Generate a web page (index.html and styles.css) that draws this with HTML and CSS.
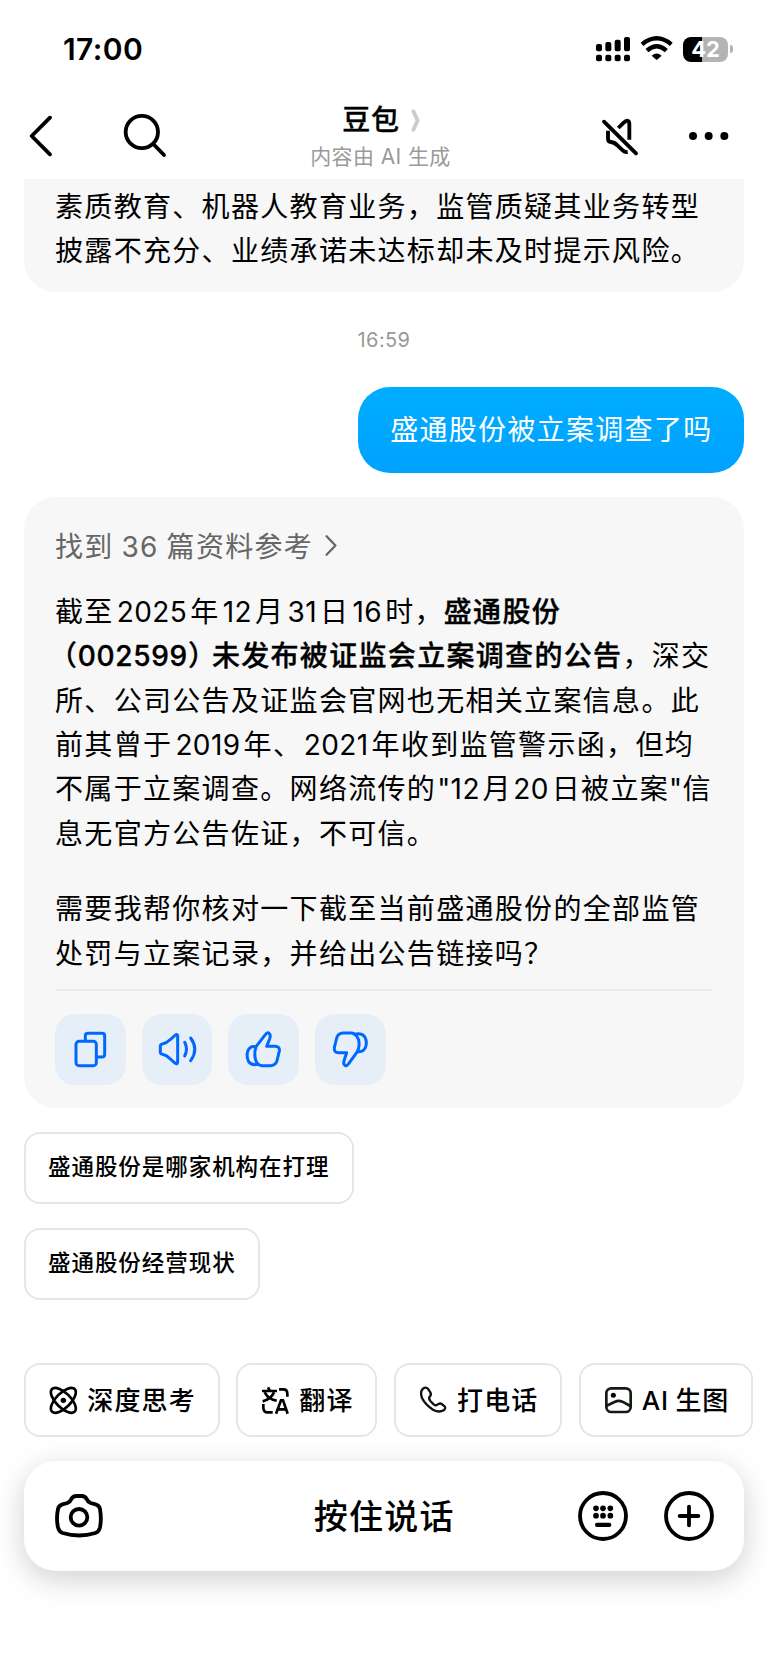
FILE: index.html
```html
<!DOCTYPE html>
<html lang="zh-CN">
<head>
<meta charset="utf-8">
<title>豆包</title>
<link rel="stylesheet" href="styles.css">
</head>
<body>
<div class="phone">
  <div class="status">
    <span class="clock">17:00</span>
    <div class="status-icons">
      <svg class="signal" viewBox="633 108 102 78"><g fill="#000"><rect x="633" y="132" width="18" height="22" rx="6"/><rect x="661" y="126" width="18" height="28" rx="6"/><rect x="689" y="119" width="18" height="35" rx="6"/><rect x="717" y="111" width="18" height="43" rx="6"/><rect x="633" y="164" width="18" height="20" rx="6"/><rect x="661" y="164" width="18" height="20" rx="6"/><rect x="689" y="164" width="18" height="20" rx="6"/><rect x="717" y="164" width="18" height="20" rx="6"/></g></svg>
      <svg class="wifi" viewBox="765 108 99 78"><path d="M771 133Q815 97 859 133M786 152Q815 126 844 152" fill="none" stroke="#000" stroke-width="13"/><path d="M800 167Q815 154 830 167L818 178Q815 181 812 178Z"/></svg>
      <div class="battery"><span>42</span></div>
      <span class="battery-tip"></span>
    </div>
  </div>

  <header class="header">
    <svg class="back" viewBox="84 339 78 138"><path d="M150 353L95 408L150 463" class="line w11"/></svg>
    <svg class="search" viewBox="366 339 138 138"><circle cx="425.500" cy="396" r="48.500" class="line w11"/><path d="M460 432L492 465" class="line w11"/></svg>
    <div class="title">
      <div class="name">豆包<svg viewBox="76 322 36 76"><path d="M86 332L99 360L86 388" fill="none" stroke="#ccc" stroke-width="12" stroke-linecap="round" stroke-linejoin="round"/></svg></div>
      <div class="sub">内容由 AI 生成</div>
    </div>
    <svg class="mute" viewBox="648 339 120 138"><g class="line w11"><path d="M660 365L756 460"/><path stroke-linecap="butt" d="M703 384L719 368Q736 354 736 373V419"/><path stroke-linecap="butt" d="M672 392V416Q672 425 681 426Q692 427 701 437L717 452Q722 457 731 456"/></g></svg>
    <svg class="more" viewBox="909 339 132 138"><circle cx="927" cy="408" r="12"/><circle cx="974" cy="408" r="12"/><circle cx="1021" cy="408" r="12"/></svg>
  </header>

  <main class="chat">
    <section class="card card-prev">
      <p><span>素质教育、机器人教育业务，监管质疑其业务转型</span><span>披露不充分、业绩承诺未达标却未及时提示风险。</span></p>
    </section>
    <time class="time">16:59</time>
    <div class="bubble">盛通股份被立案调查了吗</div>
    <section class="card answer">
      <div class="source">找到 36 篇资料参考<svg viewBox="970 160 44 76"><path d="M977 170L1004 198L977 226" fill="none" stroke="#666" stroke-width="7" stroke-linecap="round" stroke-linejoin="round"/></svg></div>
      <p>
        <span>截至<i>2025</i>年<i>12</i>月<i>31</i>日<i>16</i>时，<b>盛通股份</b></span>
        <span><b class="lead">（002599<em class="close">）</em></b><b>未发布被证监会立案调查的公告</b>，深交</span>
        <span>所、公司公告及证监会官网也无相关立案信息。此</span>
        <span>前其曾于<i>2019</i>年、<i class="tight">2021</i>年收到监管警示函，但均</span>
        <span>不属于立案调查。网络流传的<i class="quote">"12</i>月<i class="tight">20</i>日被立案<i class="unquote">"</i>信</span>
        <span>息无官方公告佐证，不可信。</span>
      </p>
      <p class="follow">
        <span>需要我帮你核对一下截至当前盛通股份的全部监管</span>
        <span>处罚与立案记录，并给出公告链接吗？</span>
      </p>
      <div class="actions">
        <button><svg viewBox="166 402 212 212"><path d="M257 480V468Q257 460 265 460H307Q315 460 315 468V523Q315 531 307 531H295" class="blue"/><rect x="229" y="484" width="61" height="73" rx="9" class="blue"/></svg></button>
        <button><svg viewBox="426 402 212 212"><path d="M481 498Q481 493 487 492Q499 490 509 480L525 466Q533 460 533 469V546Q533 555 525 549L509 535Q499 525 487 523Q481 522 481 517Z" class="blue"/><path d="M554 487Q565 507 554 528M572 474Q597 508 572 542" class="blue"/></svg></button>
        <button><svg viewBox="686 402 212 212"><path d="M770 500L798 464Q804 455 810 461Q815 465 811 476L802 499H827Q842 499 840 513L833 542Q829 556 815 557H788Q772 556 768 536Q764 518 770 500Z" class="blue"/><path d="M767 500Q752 497 745 514Q741 528 747 543Q754 557 776 553" class="blue"/></svg></button>
        <button><svg viewBox="946 402 212 212"><path d="M1073 515L1046 552Q1040 561 1034 554Q1030 550 1034 539L1041 518H1017Q1002 518 1004 503L1011 474Q1015 460 1030 459H1056Q1070 461 1077 480Q1081 498 1073 515Z" class="blue"/><path d="M1064 463Q1084 458 1095 470Q1104 486 1097 503Q1090 517 1075 515" class="blue"/></svg></button>
      </div>
    </section>
    <div class="suggests">
      <button class="pill">盛通股份是哪家机构在打理</button>
      <button class="pill">盛通股份经营现状</button>
    </div>
  </main>

  <nav class="tools">
    <button class="pill"><svg viewBox="147 137 86 86"><g fill="none" stroke="#000" stroke-width="8"><ellipse cx="190" cy="180" rx="48" ry="22" transform="rotate(45 190 180)"/><ellipse cx="190" cy="180" rx="48" ry="22" transform="rotate(-45 190 180)"/></g><circle cx="190" cy="180" r="8"/></svg><span>深度思考</span></button>
    <button class="pill"><svg viewBox="782 134 86 86"><g fill="none" stroke="#000" stroke-width="8"><path d="M785 149H830M803 138L809 149M793 153Q805 175 829 178M821 153Q812 173 787 180"/><path d="M836 144H849Q861 144 861 157V166M789 188V199Q789 213 803 213H817M827 217L842 177H848L862 217M833 204H857"/></g></svg><span>翻译</span></button>
    <button class="pill"><svg viewBox="102 137 86 86"><path d="M114 145Q123 138 130 147L136 156Q140 163 134 169Q130 175 136 182L146 192Q152 197 157 193Q164 187 170 191L178 197Q184 203 176 210Q162 218 144 208Q121 193 111 173Q104 154 114 145Z" fill="none" stroke="#111" stroke-width="7"/></svg><span>打电话</span></button>
    <button class="pill"><svg viewBox="657 137 86 86"><g fill="none" stroke="#121c10" stroke-width="8"><rect x="664" y="144" width="73" height="71" rx="15"/><path d="M665 196L690 184Q701 179 712 184L736 197"/></g><circle cx="685" cy="165" r="7.500"/></svg><span class="latin">AI 生图</span></button>
  </nav>

  <footer class="input">
    <svg class="camera" viewBox="162 450 150 156"><g fill="none" stroke="#000" stroke-width="11.500"><path d="M202 489Q211 485 214 477Q219 468 229 468H245Q255 468 260 477Q263 485 272 489L287 493Q298 496 300 507Q305 537 300 562Q297 575 286 579Q237 594 188 579Q177 575 174 562Q168 537 174 507Q176 496 187 493Z"/><circle cx="237" cy="532" r="25"/></g></svg>
    <span class="talk">按住说话</span>
    <svg viewBox="580 450 150 156"><circle cx="655" cy="528" r="69" class="line w11"/><g><circle cx="634" cy="505" r="8.500"/><circle cx="655" cy="505" r="8.500"/><circle cx="677" cy="505" r="8.500"/><circle cx="634" cy="527" r="8.500"/><circle cx="655" cy="527" r="8.500"/><circle cx="677" cy="527" r="8.500"/><rect x="631" y="548" width="49" height="13" rx="6"/></g></svg>
    <svg viewBox="840 450 150 156"><circle cx="915" cy="528" r="69" class="line w11"/><path d="M887 528H943M915 500V556" class="line w11"/></svg>
  </footer>
</div>
</body>
</html>
```

FILE: styles.css
```css
* { box-sizing: border-box; }
body { margin: 0; background: #fff; }
.phone {
  width: 768px; height: 1663px; overflow: hidden;
  display: flex; flex-direction: column;
  font-family: Inter, "Noto Sans CJK SC", sans-serif;
  color: #000; background: #fff;
}
svg { display: block; flex: none; overflow: visible; }
button { font: inherit; color: inherit; margin: 0; padding: 0; border: 0; background: none; }
.line { fill: none; stroke: #000; stroke-linecap: round; stroke-linejoin: round; }
.w11 { stroke-width: 11.500px; }
.blue { fill: none; stroke: #0068ff; stroke-width: 9; stroke-linecap: round; stroke-linejoin: round; }

.status { height: 93px; padding: 5px 35px 0 63px; display: flex; align-items: center; justify-content: space-between; }
.clock { font-size: 30px; font-weight: 600; line-height: 40px; letter-spacing: .4px; }
.status-icons { display: flex; align-items: center; }
.signal { width: 34px; height: 26px; }
.wifi { width: 33px; height: 26px; margin-left: 10px; }
.battery {
  width: 45px; height: 25px; margin-left: 10px; border-radius: 8px; margin-right: 1px;
  background: linear-gradient(90deg, #000 0 43%, #b3b3b3 43%);
  color: #fff; font-size: 22px; font-weight: 700; line-height: 25px; text-align: center;
}
.battery-tip { width: 3px; height: 8px; margin-left: 1px; border-radius: 0 4px 4px 0; background: #b3b3b3; }

.header { height: 86px; display: flex; align-items: center; padding: 0 37px 0 28px; }
.back { width: 26px; height: 46px; }
.search { width: 46px; height: 46px; margin-left: 68px; }
.title { flex: 1; display: flex; flex-direction: column; align-items: center; padding: 2px 7px 0 0; }
.name { display: flex; align-items: center; font-size: 28px; font-weight: 500; -webkit-text-stroke: .3px; line-height: 40px; letter-spacing: .8px; padding-left: 3px; margin-top: -1px; margin-bottom: 1px; }
.name svg { width: 12px; height: 25px; margin-left: 10px; }
.sub { font-size: 21px; line-height: 32px; color: #999; letter-spacing: .4px; white-space: nowrap; }
.mute { width: 40px; height: 46px; }
.more { width: 44px; height: 46px; margin-left: 47px; }

.chat { display: flex; flex-direction: column; padding: 0 24px; }
.card { background: #f7f7f7; border-radius: 32px; padding: 0 31px; }
.card p { margin: 0; font-size: 28px; line-height: 44.400px; letter-spacing: 1.320px; }
.card p span { display: block; white-space: nowrap; }
.card i { font-style: normal; padding: 0 3.100px; letter-spacing: .4px; }
.card .tight { padding: 0 3px 0 1.500px; }
.card .quote { padding: 0 2.500px 0 1px; }
.card .unquote { padding: 0; }
.card b { font-weight: 500; -webkit-text-stroke: .35px; }
.card em { font-style: normal; }
.card .lead { letter-spacing: .7px; margin-left: -6px; }
.card .close { letter-spacing: -4px; }
.card-prev { height: 113px; padding-top: 6px; border-radius: 0 0 32px 32px; }
.time { margin-top: 33px; height: 30px; line-height: 30px; font-size: 20px; letter-spacing: .4px; text-align: center; color: #999; }
.bubble {
  align-self: flex-end; margin-top: 32px; height: 86px; padding: 0 31.500px 0 32px; line-height: 86px;
  border-radius: 32px; background: linear-gradient(#00adff, #00a2ff); color: #fff;
  font-size: 28px; letter-spacing: 1.300px; white-space: nowrap;
}
.answer { margin-top: 24px; height: 611px; padding-top: 26px; }
.source { display: flex; align-items: center; height: 44px; margin-bottom: 22.800px; font-size: 28px; letter-spacing: 1.300px; word-spacing: -1.300px; color: #666; }
.source svg { width: 15px; height: 25px; margin-left: 11px; }
.card .follow { margin-top: 31px; padding-bottom: 13.200px; border-bottom: 2px solid #ebebeb; }
.actions { display: flex; gap: 16px; padding-top: 23px; }
.actions button { width: 70.700px; height: 70.700px; border-radius: 20px; background: #e6eff8; }
.actions svg { width: 70.700px; height: 70.700px; }
.suggests { display: flex; flex-direction: column; align-items: flex-start; gap: 24px; padding-top: 24px; }
.pill { display: flex; align-items: center; border: 2px solid #e6e6e6; border-radius: 16px; background: #fff; font-weight: 500; white-space: nowrap; }
.suggests .pill { height: 72px; padding: 0 22.500px 7px 22px; font-size: 22.500px; letter-spacing: .95px; }

.tools { display: flex; gap: 16.300px; padding: 63px 15px 0 24px; }
.tools .pill { height: 74px; padding: 0 21.800px 0 23px; font-size: 26px; letter-spacing: 1.200px; gap: 9.500px; }
.tools span { padding-bottom: 3px; }
.tools .latin { letter-spacing: .6px; word-spacing: -.5px; }
.tools svg { width: 28.700px; height: 28.700px; }

.input {
  margin: 24px 24px 0; height: 110px; padding: 0 30px; border-radius: 32px; background: #fff;
  box-shadow: 0 8px 30px rgba(0, 0, 0, .19);
  display: grid; grid-template-columns: 50px 1fr 50px 50px; column-gap: 36.500px; align-items: center;
}
.input svg { width: 50px; height: 52px; }
.talk { padding: 0 0 3px 87px; text-align: center; font-size: 34px; font-weight: 500; letter-spacing: 1.300px; }
```
